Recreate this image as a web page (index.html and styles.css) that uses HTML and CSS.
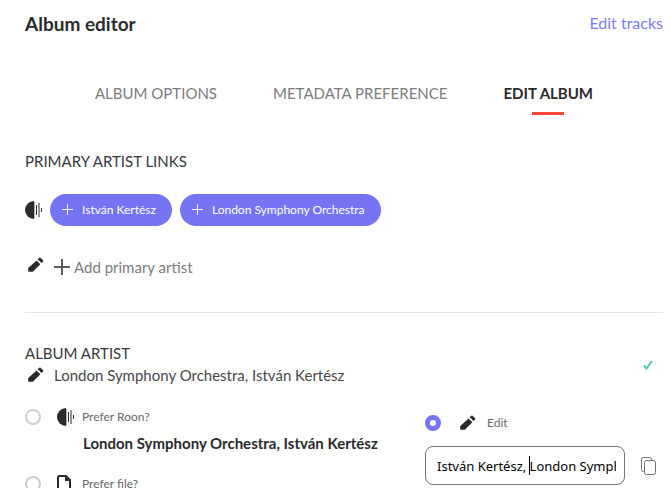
FILE: index.html
```html
<!DOCTYPE html>
<html lang="en">
<head>
<meta charset="utf-8">
<title>Album editor</title>
<link rel="stylesheet" href="styles.css">
</head>
<body>
<svg class="sprite" aria-hidden="true">
  <symbol id="roon" viewBox="0 0 18 18">
    <path d="M9 0v18A9 9 0 0 1 9 0z"/>
    <path d="M9 1h1v16H9z" opacity=".4"/>
    <path d="M11 4h1v10h-1z"/>
    <path d="M13 2h2v14h-2z" opacity=".5"/>
    <path d="M16 7h1v4h-1z"/>
  </symbol>
  <symbol id="pencil" viewBox="0 0 16 16">
    <path d="M8.600 3.400 12.400 7.200 4.800 14.700H.8Q.2 14.700.2 14.100V11z"/>
    <path d="M9.700 2.200 11.300.7q.6-.5 1.200 0l2.600 2.600q.5.600 0 1.200L13.500 6z"/>
  </symbol>
  <symbol id="plus" viewBox="0 0 12 12">
    <path d="M5.500 0v11M0 5.500h11" fill="none" stroke="currentColor"/>
  </symbol>
  <symbol id="file" viewBox="0 0 14 18">
    <path d="M1 2.500Q1 1 2.500 1H9l4 4v10.500q0 1.500-1.500 1.500h-9Q1 17 1 15.500z" fill="none" stroke="currentColor" stroke-width="2"/>
    <path d="M8 1v5h5.500z"/>
  </symbol>
</svg>

<main class="editor">
  <header class="header">
    <h1 class="title">Album editor</h1>
    <a class="link" href="#tracks">Edit tracks</a>
  </header>

  <nav class="tabs">
    <button class="tab" type="button">ALBUM OPTIONS</button>
    <button class="tab" type="button">METADATA PREFERENCE</button>
    <button class="tab tab-active" type="button" aria-current="page">EDIT ALBUM</button>
  </nav>

  <section class="links">
    <h2 class="heading">PRIMARY ARTIST LINKS</h2>
    <div class="chips">
      <svg class="roon"><use href="#roon"/></svg>
      <button class="chip" type="button"><svg class="chip-plus"><use href="#plus"/></svg>István Kertész</button>
      <button class="chip" type="button"><svg class="chip-plus"><use href="#plus"/></svg>London Symphony Orchestra</button>
    </div>
    <div class="add-row">
      <svg class="pencil"><use href="#pencil"/></svg>
      <button class="add" type="button"><svg class="add-plus" viewBox="0 0 16 16"><path d="M8 0v16M0 8h16" fill="none" stroke="currentColor" stroke-width="2"/></svg>Add primary artist</button>
    </div>
  </section>

  <section class="artist">
    <h2 class="heading">ALBUM ARTIST</h2>
    <div class="current">
      <svg class="pencil"><use href="#pencil"/></svg>
      <span class="current-name">London Symphony Orchestra, István Kertész</span>
      <svg class="check" viewBox="0 0 10 10"><path d="M1 5.500 3.500 8.500 9 1" fill="none" stroke="#4fc9b8" stroke-width="2"/></svg>
    </div>

    <div class="choices">
      <div class="sources">
        <label class="option"><input class="radio" type="radio" name="source"><svg class="roon"><use href="#roon"/></svg><span>Prefer Roon?</span></label>
        <p class="value">London Symphony Orchestra, István Kertész</p>
        <label class="option"><input class="radio" type="radio" name="source"><svg class="file"><use href="#file"/></svg><span>Prefer file?</span></label>
      </div>
      <div class="manual">
        <label class="option option-edit"><input class="radio" type="radio" name="source" checked><svg class="pencil"><use href="#pencil"/></svg><span>Edit</span></label>
        <div class="entry">
          <div class="field">
            <input class="text" type="text" aria-label="Album artist" value="István Kertész, London Symphony Orchestra">
            <span class="caret"></span>
          </div>
          <button class="copy" type="button" aria-label="Copy"><svg class="copy-icon" viewBox="0 0 15 18" fill="none" stroke="#707074"><path d="M3.500 14.500h-1q-2 0-2-2v-10q0-2 2-2h6q2 0 2 2v1"/><rect x="3.500" y="3.500" width="11" height="14" rx="2"/></svg></button>
        </div>
      </div>
    </div>
  </section>
</main>
</body>
</html>
```
FILE: styles.css
```css
* {
  box-sizing: border-box;
}

body {
  height: 100vh;
  margin: 0;
  overflow: hidden;
  background: #fff;
  color: #2b2b2f;
  font: 15px/24px Lato, sans-serif;
}

button {
  padding: 0;
  border: 0;
  background: none;
  color: inherit;
  font: inherit;
  white-space: nowrap;
}

svg {
  flex: none;
  fill: currentColor;
}

.sprite {
  position: absolute;
  width: 0;
  height: 0;
}

.editor {
  padding: 0 8px 0 25px;
}

.header {
  display: flex;
  align-items: center;
  justify-content: space-between;
  height: 48px;
}

.title {
  margin: 0;
  font-size: 19px;
  font-weight: 700;
}

.link {
  margin-bottom: 2px;
  color: #7c7bf4;
  font-size: 16px;
  text-decoration: none;
}

.tabs {
  display: flex;
  justify-content: center;
  gap: 56px;
  margin-top: 33px;
}

.tab {
  display: flex;
  flex-direction: column;
  align-items: center;
  gap: 7px;
  color: #7c7c7f;
}

.tab::after {
  width: 32px;
  height: 3px;
  content: "";
}

.tab-active {
  color: #2b2b2f;
  font-weight: 700;
}

.tab-active::after {
  background: #fb4538;
}

.heading {
  margin: 0;
  color: #38383c;
  font-size: 15px;
  font-weight: 400;
}

.links {
  padding: 34px 0 33px;
  border-bottom: 1px solid #e1e1e3;
}

.chips {
  display: flex;
  align-items: center;
  gap: 8px;
  margin-top: 21px;
}

.roon {
  width: 18px;
  height: 18px;
  margin-right: -1px;
}

.chip {
  display: flex;
  align-items: center;
  gap: 8px;
  height: 32px;
  padding: 0 16px 0 12px;
  border-radius: 16px;
  background: #7574f3;
  color: #fff;
  font-size: 12px;
}

.chip-plus {
  width: 12px;
  height: 12px;
}

.add-row {
  display: flex;
  align-items: center;
  gap: 10px;
  margin-top: 29px;
  padding-left: 3px;
}

.pencil {
  width: 16px;
  height: 16px;
}

.add-row .pencil {
  margin-bottom: 4px;
}

.add {
  display: flex;
  align-items: center;
  gap: 4px;
  color: #7c7c7f;
}

.add-plus {
  width: 16px;
  height: 16px;
  color: #5c5c60;
}

.artist {
  padding-top: 28px;
}

.current {
  display: flex;
  align-items: center;
  gap: 10px;
  height: 20px;
  padding: 0 10px 0 3px;
  color: #2b2b2f;
}

.current-name {
  color: #48484c;
}

.check {
  width: 10px;
  height: 10px;
  margin: 0 0 20px auto;
}

.choices {
  display: grid;
  grid-template-columns: 1fr 238px;
  margin-top: 20px;
}

.option {
  display: flex;
  align-items: center;
  gap: 8px;
  color: #68686c;
  font-size: 12px;
}

.option svg {
  color: #2b2b2f;
}

.option-edit {
  gap: 11px;
}

.radio {
  width: 16px;
  height: 16px;
  margin: 0 8px 0 0;
  border: 2px solid #cececf;
  border-radius: 50%;
  background: #fff;
  appearance: none;
}

.radio:checked {
  border: 5px solid #7574f3;
}

.file {
  width: 14px;
  height: 18px;
  margin-right: 3px;
}

.value {
  margin: 2px 0 17px 58px;
  font-weight: 700;
}

.manual {
  padding-top: 6px;
}

.entry {
  display: flex;
  align-items: center;
  gap: 16px;
  margin-top: 11px;
}

.field {
  position: relative;
  width: 200px;
}

.text {
  display: block;
  width: 100%;
  height: 39px;
  padding: 0 8px 0 11px;
  border: 1px solid #747477;
  border-radius: 8px;
  background: #fff;
  color: #000;
  font: 13px "Noto Sans", sans-serif;
}

.caret {
  position: absolute;
  top: 10px;
  left: 104px;
  width: 1px;
  height: 19px;
  background: #000;
}

.copy {
  display: flex;
}

.copy-icon {
  width: 15px;
  height: 18px;
  fill: none;
}
```
